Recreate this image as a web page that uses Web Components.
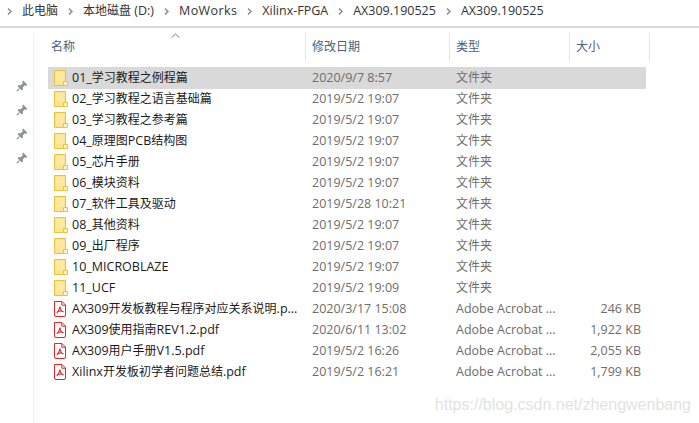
<!DOCTYPE html>
<html lang="zh"><head><meta charset="utf-8"><style>
html,body{margin:0;padding:0;background:#fff;width:699px;height:423px;overflow:hidden}
body{font:12px/16px "Open Sans","Noto Sans CJK SC",sans-serif;color:#1a1a1a}
</style></head><body>
<x-explorer>
<x-crumbs slot="bar"><x-crumb>此电脑</x-crumb><x-crumb>本地磁盘 (D:)</x-crumb><x-crumb track=".4">MoWorks</x-crumb><x-crumb>Xilinx-FPGA</x-crumb><x-crumb>AX309.190525</x-crumb><x-crumb>AX309.190525</x-crumb></x-crumbs>
<x-pins slot="side" count="4"></x-pins>
<x-head slot="head"></x-head>
<x-row slot="rows" selected name="01_学习教程之例程篇" date="2020/9/7 8:57" type="文件夹"></x-row>
<x-row slot="rows" name="02_学习教程之语言基础篇" date="2019/5/2 19:07" type="文件夹"></x-row>
<x-row slot="rows" name="03_学习教程之参考篇" date="2019/5/2 19:07" type="文件夹"></x-row>
<x-row slot="rows" name="04_原理图PCB结构图" date="2019/5/2 19:07" type="文件夹"></x-row>
<x-row slot="rows" name="05_芯片手册" date="2019/5/2 19:07" type="文件夹"></x-row>
<x-row slot="rows" name="06_模块资料" date="2019/5/2 19:07" type="文件夹"></x-row>
<x-row slot="rows" name="07_软件工具及驱动" date="2019/5/28 10:21" type="文件夹"></x-row>
<x-row slot="rows" name="08_其他资料" date="2019/5/2 19:07" type="文件夹"></x-row>
<x-row slot="rows" name="09_出厂程序" date="2019/5/2 19:07" type="文件夹"></x-row>
<x-row slot="rows" name="10_MICROBLAZE" date="2019/5/2 19:07" type="文件夹"></x-row>
<x-row slot="rows" name="11_UCF" date="2019/5/2 19:09" type="文件夹"></x-row>
<x-row slot="rows" pdf name="AX309开发板教程与程序对应关系说明.p..." date="2020/3/17 15:08" type="Adobe Acrobat ..." size="246 KB"></x-row>
<x-row slot="rows" pdf name="AX309使用指南REV1.2.pdf" date="2020/6/11 13:02" type="Adobe Acrobat ..." size="1,922 KB"></x-row>
<x-row slot="rows" pdf name="AX309用户手册V1.5.pdf" date="2019/5/2 16:26" type="Adobe Acrobat ..." size="2,055 KB"></x-row>
<x-row slot="rows" pdf name="Xilinx开发板初学者问题总结.pdf" date="2019/5/2 16:21" type="Adobe Acrobat ..." size="1,799 KB"></x-row>
<span slot="mark">https://blog.csdn.net/zhengwenbang</span>
</x-explorer>
<script>
const def=(n,html)=>customElements.define(n,class extends HTMLElement{
  connectedCallback(){if(this.shadowRoot)return;this.attachShadow({mode:'open'}).innerHTML=html(this);}
});
const esc=s=>(s||'').replace(/&/g,'&amp;').replace(/</g,'&lt;');
/* Latin runs run wider than the CJK in the reference's UI font */
const lat=s=>esc(s).replace(/[\x20-\x7e]+/g,m=>`<span style="font-size:12.5px">${m}</span>`);
def('x-explorer',()=>`<style>
:host{display:block;position:relative;width:699px;height:423px;overflow:hidden}
.bar{height:26px;border-bottom:2px solid #d9d9d9}
.main{display:flex;height:390px;padding-top:5px}
.side{width:33px;flex:none;border-right:1px solid #f0f0f0}
.list{flex:1;min-width:0;display:flex;flex-direction:column;margin-left:14px}
.rows{display:flex;flex-direction:column;margin-top:6px}
.mark{position:absolute;right:8px;top:395px;font:16px/20px "Liberation Sans",sans-serif;color:#e3e3e3;white-space:nowrap}
</style>
<div class="bar"><slot name="bar"></slot></div>
<div class="main"><div class="side"><slot name="side"></slot></div>
<div class="list"><slot name="head"></slot><div class="rows"><slot name="rows"></slot></div></div></div>
<div class="mark"><slot name="mark"></slot></div>`);
def('x-crumbs',()=>`<style>:host{display:flex;height:22px;align-items:center;padding-left:7px;gap:10px;color:#333;white-space:nowrap}</style><slot></slot>`);
def('x-crumb',e=>`<style>:host{display:flex;align-items:center;gap:10px}svg{display:block;flex:none}span{letter-spacing:${e.getAttribute('track')||0}px}</style>
<svg width="5" height="7" viewBox="0 0 5 7"><path d="M1 .5 4 3.500 1 6.500" fill="none" stroke="#888" stroke-width="1.400"/></svg><span>${lat(e.textContent)}</span>`);
def('x-pins',e=>{const pin=`<svg width="12" height="12" viewBox="0 0 12 12"><path d="M7.200 .6 11.400 4.800 10 5.800 8.600 5.400 6.800 7.400 7 9.400 5.800 10.400 1.600 6.200 2.600 5 4.600 5.200 6.600 3.400 6.200 2Z" fill="#8a959b"/><path d="M3.600 8.400.8 11.200" stroke="#98a2a8" stroke-width="1.300"/></svg>`;
return `<style>:host{display:flex;flex-direction:column;gap:12px;padding:47px 0 0 16px}svg{display:block}</style>`+pin.repeat(+e.getAttribute('count'));});
def('x-head',()=>`<style>
:host{display:grid;grid-template-columns:258px 144px 120px 80px;height:28px;position:relative;color:#4c607a}
div{padding-left:6px;border-right:1px solid #e5e5e5;line-height:28px;box-sizing:border-box}
div:first-of-type{padding-left:3px}
svg{position:absolute;left:123px;top:0}
</style><div>名称</div><div>修改日期</div><div>类型</div><div>大小</div>
<svg width="9" height="6" viewBox="0 0 9 6"><path d="M.7 4.600 4.500 1 8.300 4.600" fill="none" stroke="#7b7b7b" stroke-width="1"/></svg>`);
const folder=`<svg width="14" height="18" viewBox="0 0 14 18"><path d="M.5 1.500H11.500V12.500L9 16.500H.5Z" fill="#fde48f" stroke="#edc13f"/><path d="M2 3H10V12H2Z" fill="#fff0b8" opacity=".45"/><path d="M9.500 16.500V12.500H13.500V16.500Z" fill="#fff3c4" stroke="#edc13f"/><path d="M11.500 1.500V12.500" stroke="#edc13f"/></svg>`;
const pdf=`<svg width="14" height="16" viewBox="0 0 14 16"><path d="M1.500 .5H9L12.500 4V14A1.500 1.500 0 0 1 11 15.500H3A1.500 1.500 0 0 1 1.500 14Z" fill="#fff" stroke="#e5252a"/><path d="M8.800 .8V4.200H12.200" fill="none" stroke="#e5252a"/><path d="M7 5.500C6.500 8 5.500 10.500 3.800 12 M7 5.500C7.300 8.500 8.500 10.500 10.500 11 M4.500 10.800C6.500 9.800 8.500 9.800 10.500 10.600" fill="none" stroke="#e5252a" stroke-width="1.100"/></svg>`;
def('x-row',e=>{const a=k=>lat(e.getAttribute(k));return `<style>
:host{display:grid;grid-template-columns:24px 240px 144px 120px 65px;height:21px;width:598px;align-items:center;color:#6d6d6d;white-space:nowrap;line-height:21px}
:host([selected]){background:#d9d9d9;box-shadow:0 1px 0 #d9d9d9}
.i{display:flex;justify-content:center;padding-left:${e.hasAttribute('pdf')?0:1}px}svg{display:block}
.n{color:#1a1a1a}.s{text-align:right}
</style><div class="i">${e.hasAttribute('pdf')?pdf:folder}</div><div class="n">${a('name')}</div><div>${a('date')}</div><div>${a('type')}</div><div class="s">${a('size')}</div>`});
</script>
</body></html>
